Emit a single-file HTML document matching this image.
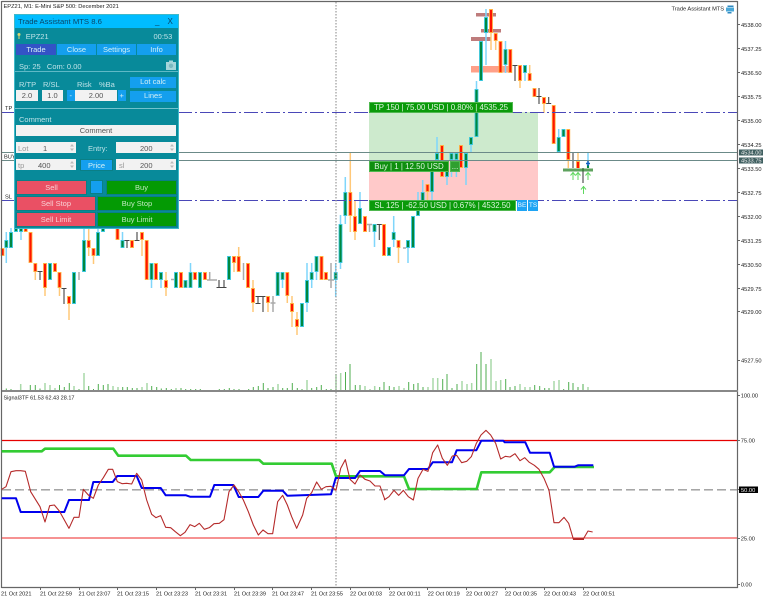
<!DOCTYPE html>
<html>
<head>
<meta charset="utf-8">
<style>
html,body{margin:0;padding:0;background:#fff;}
#p{position:relative;width:769px;height:600px;overflow:hidden;background:#fff;font-family:"Liberation Sans",sans-serif;filter:blur(0.3px);}
svg{position:absolute;left:0;top:0;}
svg text{font-family:"Liberation Sans",sans-serif;}
.a{position:absolute;box-sizing:border-box;white-space:nowrap;}
.b{position:absolute;box-sizing:border-box;text-align:center;white-space:nowrap;font-size:7.5px;color:#d5f0f5;}
.t{background:#149fee;}
.i{background:#f2f2f2;color:#555;}
.s{background:#ea5064;color:#f8d0d4;border:1px solid #0b7f86;}
.g{background:#049a04;color:#bfe8bf;border:1px solid #0b7f86;}
.l{position:absolute;font-size:7.5px;color:#bfe3e8;white-space:nowrap;line-height:9px;}
.tl{font-size:7.9px;color:#dff5df;}
</style>
</head>
<body>
<div id="p">
<svg width="769" height="600" viewBox="0 0 769 600" fill="none">
<!-- trade zones -->
<rect x="369" y="112" width="169" height="48" fill="#cdeacd"/>
<rect x="369" y="160" width="169" height="40" fill="#ffc9c9"/>
<!-- volumes -->
<path stroke="#a9d9a9" stroke-width="1.5" d="M20.7 390v-6M45 390v-7M50 390v-5M55 390v-2M74 390v-4M84 390v-17M113 390v-4M118 390v-3M142 390v-3M147 390v-7M176 390v-2M278 390v-6M307 390v-10M336 390v-16M340.7 390v-17M365 390v-4M370 390v-1M374.7 390v-4M399 390v-4M404 390v-2M428 390v-3M433 390v-12M437.7 390v-12M462 390v-9M467 390v-6M471.7 390v-7M491 390v-31M496 390v-9M500.7 390v-10M520 390v-6M525 390v-3M530 390v-3M554 390v-9M559 390v-10M588 390v-3"/>
<path stroke="#4fae4f" stroke-width="1" d="M6.3 390v-1.500M11 390v-1M30.300 390v-5M35.300 390v-5M40 390v-1.500M59.500 390v-5M64.300 390v-3M69.300 390v-7M79 390v-1M88.700 390v-4M93.500 390v-1M98.300 390v-6M103.300 390v-5M108 390v-6M122.700 390v-3M127.300 390v-3M132.300 390v-2M137 390v-2M151.700 390v-4M156.700 390v-3M161.300 390v-1.500M166.300 390v-2M171.300 390v-1M181 390v-2M185.700 390v-1M190.700 390v-1M195.700 390v-1M200.300 390v-1M219.300 390v-1M224.300 390v-1M229.300 390v-2M234 390v-1M239 390v-1M248.700 390v-1M253.300 390v-3M258.300 390v-4M263.300 390v-7M268 390v-2M273 390v-3M282.700 390v-2M287.300 390v-2M292.300 390v-7M297.300 390v-2M302 390v-1M311.700 390v-2M316.700 390v-3M321.300 390v-5M326.300 390v-1M331 390v-1M345.500 390v-18M350 390v-26M355.300 390v-5M360 390v-5M379.700 390v-3M384 390v-8M389.300 390v-4M394 390v-3M408.700 390v-8M413.700 390v-6M418 390v-7M423 390v-3M442.700 390v-11M447 390v-16M452 390v-2M457 390v-6M476.700 390v-26M481 390v-38M486 390v-26M505.700 390v-11M510 390v-3M515 390v-4M534.700 390v-5M539.700 390v-4M544.700 390v-2M549 390v-2M563.700 390v-1M568.700 390v-8M573 390v-7M578 390v-3M583 390v-6"/>
<!-- pattern bars -->
<rect x="476" y="13" width="20" height="3.500" fill="#a85050" opacity=".75"/>
<rect x="481" y="29" width="20" height="3.500" fill="#a85050" opacity=".75"/>
<rect x="471" y="37" width="20" height="4" fill="#a85050" opacity=".75"/>
<rect x="471" y="66" width="40" height="6.500" fill="#ff8060" opacity=".75"/>
<!-- wicks -->
<path stroke="#7fd6fb" stroke-width="1.500" d="M6.300 232V263M11 228V232M21 232V240M84 226V240M98 228V232M122.500 232V240M151.500 280V288M161 280V288M190.500 263V272M282.500 280V288M307 263V312M311.700 263V288M316.500 272V280M335.700 263V297M340.500 215V269M345.300 177V224M360 192V208M374.500 232V247M393.700 216V247M408 248V263M418 192V208M422.700 180V192M432 192V200M437 137V153M447 177V185M451.500 160V177M456.400 160V177M466 168V185M471 145V153M476.500 81V89M486 9V65M505.500 41V73M525 73V81M558.700 129V137M588 152V165"/>
<path stroke="#ffc878" stroke-width="1.500" d="M35.300 272V280M45 288V296M59.500 288V296M69 304V320M88.700 228V256M93.500 256V264M142 240V256M166 272V296M234 263V272M238.700 247V256M253 280V312M268 303V312M287.300 296V303M292 296V327M297 312V335M350.300 153V232M355 200V240M398.500 248V263M427.500 192V200M491 33V50M495.700 41V50M544 104V113M568.300 160V168M578 152V161M520 81V88M529.700 65V73"/>
<!-- dojis -->
<path stroke="#444" stroke-width="1.100" d="M40 271V280M37.500 271.500H42.500M64 288V304M61.500 288.500H66.500M127 240V248M124.500 240.500H129.500M137 232V240M134.500 240.500H139.500M219 280V288M216.500 287.500H221.500M224 280V288M221.500 287.500H226.500M258 296V303M255.500 296.500H260.500M255.500 303.500H260.500M263 296V312M260.500 296.500H265.500M379.300 224V240M376.800 224.500H381.800M515 65V81M512.500 65.500H517.500M539 88V104M536.500 96.500H541.500M548.700 97V104M546.200 103.500H551.200M573 152V168M583 168V183M590 152.500H596"/>
<path stroke="#aaa" stroke-width="1.500" d="M79 272V280M209.700 272V280M207 280H212M212 280H217M273 296V312M270.500 303H275.500M331 263V288M328 280H334M369.500 224V232M367 224.500H372M243.500 263V280M171 279.500H174M403 248H406"/>
<!-- bull bodies -->
<path stroke="#36c6dc" stroke-width="3.800" stroke-linecap="butt" d="M6.300 240V248M11 232V248M16 226V232M21 226V232M50 263V280M74 272V304M84 240V272M98 232V256M103 226V232M122.500 240V248M151.500 263V280M161 272V280M176 272V288M185.500 280V288M190.500 272V288M200 272V288M229 256V280M277.700 272V296M282.500 272V280M302 303V327M307 280V303M311.700 272V280M316.500 256V272M335.700 272V280M340.500 224V263M345.300 192V216M360 208V224M374.500 224V232M389 247V256M393.700 232V240M408 240V248M413 216V248M418 208V216M422.700 192V208M432 170V192M437 153V160M447 170V177M451.500 153V160M456.400 153V160M466 153V168M471 137V145M476.500 89V137M481 41V81M486 17V33M505.500 49V65M525 65V73M558.700 137V152M563.500 129V137"/>
<path stroke="#008840" stroke-width="2.100" d="M6.300 241V247M11 233V247M16 226V231M21 226V231M50 264V279M74 273V303M84 241V271M98 233V255M103 226V231M122.500 241V247M151.500 264V279M161 273V279M176 273V287M185.500 281V287M190.500 273V287M200 273V287M229 257V279M277.700 273V295M282.500 273V279M302 304V326M307 281V302M311.700 273V279M316.500 257V271M335.700 273V279M340.500 225V262M345.300 193V215M360 209V223M374.500 225V231M389 248V255M393.700 233V239M408 241V247M413 217V247M418 209V215M422.700 193V207M432 171V191M437 154V159M447 171V176M451.500 154V159M456.400 154V159M466 154V167M471 138V144M476.500 90V136M481 42V80M486 18V32M505.500 50V64M525 66V72M558.700 138V151M563.500 130V136M588 165V168"/>
<!-- bear bodies -->
<path stroke="#ffae3c" stroke-width="3.800" d="M2.500 248V256M25.700 226V232M30.500 232V263M35.300 263V272M45 263V288M55 263V272M59.500 272V288M69 296V304M88.700 240V248M93.500 248V256M117.500 228V240M132 240V248M142 232V240M146.700 240V280M156 263V280M166 280V288M181 272V288M195 272V280M205 272V280M234 256V263M238.700 256V272M248 263V288M253 288V303M268 296V303M287.300 272V296M292 303V312M297 319V327M321.500 256V280M326 272V280M350.300 192V216M355 216V232M365 216V232M384 224V256M398.500 240V248M427.500 184V192M442 145V177M461 145V168M491 9V33M495.700 33V41M500.500 41V73M510.300 49V73M520 65V81M529.700 73V81M534.500 88V97M544 97V104M553.700 105V144M568.300 129V160M578 161V168"/>
<path stroke="#ff1400" stroke-width="2.100" d="M2.500 249V255M25.700 226V231M30.500 233V262M35.300 264V271M45 264V287M55 264V271M59.500 273V287M69 297V303M88.700 241V247M93.500 249V255M117.500 229V239M132 241V247M142 233V239M146.700 241V279M156 264V279M166 281V287M181 273V287M195 273V279M205 273V279M234 257V262M238.700 257V271M248 264V287M253 289V302M268 297V302M287.300 273V295M292 304V311M297 320V326M321.500 257V279M326 273V279M350.300 193V215M355 217V231M365 217V231M384 225V255M398.500 241V247M427.500 185V191M442 146V176M461 146V167M491 10V32M495.700 34V40M500.500 42V72M510.300 50V72M520 66V80M529.700 74V80M534.500 89V96M544 98V103M553.700 106V143M568.300 130V159M578 162V168"/>
<!-- horizontal lines -->
<path stroke="#6b8a88" stroke-width="1" d="M2 152.500H737M2 160.500H737"/>
<path stroke="#4a48b8" stroke-width="1" stroke-dasharray="14 3 2 3" d="M2 112.500H737M2 200.500H737"/>
<!-- vertical dotted -->
<path stroke="#999" stroke-width="1.200" stroke-dasharray="1.500 1.500" d="M336 2V588"/>
<!-- blue cross and pattern -->
<path stroke="#1060c0" stroke-width="1.500" d="M588 161V166M586 163.500H590"/>
<rect x="563" y="168.500" width="30" height="3" fill="#1a7a1a" opacity=".7"/>
<path stroke="#5fd85f" stroke-width="1" d="M573 172V180M570.500 175.500L573 172.500L575.500 175.500M578 172V180M575.500 175.500L578 172.500L580.500 175.500M588 172V180M585.500 175.500L588 172.500L590.500 175.500M583.500 186V194M581 189.500L583.500 186.500L586 189.500"/>
<!-- frame -->
<path stroke="#666" stroke-width="1.200" d="M1.500 1.500H737.500M1.500 1V588M737.500 1V588M1.500 587.500H738"/>
<path stroke="#888" stroke-width="2" d="M2 391H738"/>
<path stroke="#666" stroke-width="1" d="M737 24.500h3M737 48.500h3M737 72.500h3M737 96.500h3M737 120.500h3M737 144.500h3M737 168.500h3M737 192.500h3M737 216.500h3M737 240.500h3M737 264.500h3M737 288.500h3M737 311.500h3M737 360.500h3M737 395.500h3M737 440.500h3M737 489.500h3M737 538.500h3M737 584.500h3M40.500 587v3M79.500 587v3M117.500 587v3M156.500 587v3M195.500 587v3M234.500 587v3M272.500 587v3M311.500 587v3M350.500 587v3M389.500 587v3M427.500 587v3M466.500 587v3M505.500 587v3M544.500 587v3M583.500 587v3"/>
<!-- indicator -->
<path stroke="#e60000" stroke-width="1.200" d="M2 440.500H737"/>
<path stroke="#f05050" stroke-width="1.300" d="M2 538H737"/>
<path stroke="#999" stroke-width="1.300" stroke-dasharray="9 4" d="M2 489.800H737"/>
<path stroke="#33cc33" stroke-width="2.600" stroke-linejoin="round" d="M1.700 451.300L41.700 451.300 45 448.700 113.300 448.700 118.300 455.700 186 455.700 190.700 460 259.300 460 263.300 463.700 331.700 463.700 336 476.300 404 476.300 409 489 476.700 489 481.300 472.300 549.700 472.300 554.700 467 594 467"/>
<path stroke="#0000ee" stroke-width="2" stroke-linejoin="round" d="M1.700 498.300L16 498.300 20.700 512 64.300 512 69 500 89 500 93.300 482 112.700 482 117.300 476 136.700 476 141.700 488 160.700 488 165.700 495.300 186 495.300 190 496.700 210 496.700 214.300 485 233.300 485 238.700 497 258.300 497 263.300 490.700 282.700 490.700 287.300 495.700 331 494.300 335.700 478 355 478 360 471 380 471 385 475.300 404 475.300 409 469 428 469 432.700 462.300 452 462.300 456.700 450.300 476.300 450.300 481.300 440.700 503.300 440.700 504.700 442.300 525.300 442.300 530 452.700 549.700 452.700 554 466.700 574.700 466.700 578 465.300 593.300 465.300"/>
<g transform="translate(0,385) scale(.33333)" stroke="#b52a2a" stroke-width="3.300" stroke-linejoin="round">
<path d="M5 313L18 305 33 260 48 257 62 257 76 259 92 320 120 365 135 411 149 362 163 360 178 378 207 430 222 397 237 397 250 313 265 330 280 340 295 300 310 278 325 253 338 253 352 290 366 296 380 295 395 297 410 265 425 285 440 345 455 388 468 398 482 392 497 427 512 428 526 440 541 452 555 442 570 419 584 425 598 415 613 433 628 428 642 416 658 415 672 404 687 320 702 300 716 320 730 345 745 380 760 420 775 450 789 435 804 446 818 446 833 350 848 331 862 360 875 395 890 430 908 390 920 340 935 323 950 291 964 313 978 305 993 304 1008 316 1022 250 1036 224 1050 283 1065 297 1080 270 1095 283 1110 288 1125 303 1140 303 1155 345"/>
</g>
<g transform="translate(384,385) scale(.33333)" stroke="#b52a2a" stroke-width="3.300" stroke-linejoin="round">
<path d="M0 345L15 335 30 316 44 331 58 316 73 335 88 345 102 280 117 253 132 259 146 203 161 180 175 220 190 241 205 213 218 211 233 233 248 229 262 215 277 175 291 150 306 136 320 150 335 175 350 222 364 214 378 216 393 206 408 227 422 218 436 232 451 241 465 253 480 280 495 316 510 413 525 413 540 397 554 415 568 462 598 462 612 438 626 441"/>
</g>
<path stroke="#b52a2a" stroke-width="2" d="M573 539H584"/>
<!-- top labels -->
<text x="3.500" y="8" font-size="5.700" fill="#222">EPZ21, M1:  E-Mini S&amp;P 500: December 2021</text>
<text x="671.500" y="10.500" font-size="5.700" fill="#222">Trade Assistant MTS</text>
<path d="M726 7.500h8v4h-8z" fill="#4aa8d8"/><path d="M727.500 5.500h6v1.500h-6zM727.500 12h4v1.500h-4z" fill="#2f88c0"/>
<text x="5" y="110" font-size="5.700" fill="#222">TP</text>
<text x="4" y="158.500" font-size="5.700" fill="#222">BUY</text>
<text x="5" y="198.500" font-size="5.700" fill="#222">SL</text>
<!-- price axis -->
<g font-size="5.700" fill="#222">
<text x="741" y="27">4538.00</text>
<text x="741" y="51">4537.25</text>
<text x="741" y="75">4536.50</text>
<text x="741" y="99">4535.75</text>
<text x="741" y="123">4535.00</text>
<text x="741" y="147">4534.25</text>
<text x="741" y="171">4533.50</text>
<text x="741" y="195">4532.75</text>
<text x="741" y="219">4532.00</text>
<text x="741" y="243">4531.25</text>
<text x="741" y="267">4530.50</text>
<text x="741" y="291">4529.75</text>
<text x="741" y="314">4529.00</text>
<text x="741" y="362.500">4527.50</text>
<text x="740.700" y="397.500">100.00</text>
<text x="740.700" y="442.500">75.00</text>
<text x="740.700" y="540.500">25.00</text>
<text x="740.700" y="586.500">0.00</text>
</g>
<rect x="739" y="149.500" width="24" height="6" fill="#3f5f60"/>
<rect x="739" y="157.500" width="24" height="6" fill="#3f5f60"/>
<rect x="739" y="486.500" width="19" height="6.500" fill="#000"/>
<g font-size="5.700" fill="#eee">
<text x="741" y="154.700">4534.00</text>
<text x="741" y="162.700">4533.75</text>
<text x="741" y="491.800">50.00</text>
</g>
<!-- sub labels -->
<text x="3.500" y="399.500" font-size="5.500" fill="#222">Signal3TF 61.53 62.43 28.17</text>
<!-- time axis -->
<g font-size="5.600" fill="#222">
<text x="1" y="595.500">21 Oct 2021</text>
<text x="40" y="595.500">21 Oct 22:59</text>
<text x="78.500" y="595.500">21 Oct 23:07</text>
<text x="117" y="595.500">21 Oct 23:15</text>
<text x="156" y="595.500">21 Oct 23:23</text>
<text x="195" y="595.500">21 Oct 23:31</text>
<text x="234" y="595.500">21 Oct 23:39</text>
<text x="272" y="595.500">21 Oct 23:47</text>
<text x="311" y="595.500">21 Oct 23:55</text>
<text x="350" y="595.500">22 Oct 00:03</text>
<text x="389" y="595.500">22 Oct 00:11</text>
<text x="427.700" y="595.500">22 Oct 00:19</text>
<text x="466" y="595.500">22 Oct 00:27</text>
<text x="505" y="595.500">22 Oct 00:35</text>
<text x="544" y="595.500">22 Oct 00:43</text>
<text x="583" y="595.500">22 Oct 00:51</text>
</g>
</svg>

<!-- trade labels -->
<div class="b tl" style="left:369px;top:102px;width:144px;height:11px;line-height:10px;background:#0a9a0a;border:1px solid #4fb84f;">TP 150 | 75.00 USD | 0.80% | 4535.25</div>
<div class="b tl" style="left:369px;top:161px;width:80px;height:11px;line-height:10px;background:#0f8f0f;border:1px solid #4fb84f;">Buy | 1 | 12.50 USD</div>
<div class="b tl" style="left:450px;top:161px;width:10px;height:11px;line-height:9px;background:#2f9f2f;border:1px solid #4fb84f;overflow:hidden;">...</div>
<div class="b tl" style="left:369px;top:200px;width:147px;height:11px;line-height:10px;background:#0a9a0a;border:1px solid #4fb84f;">SL 125 | -62.50 USD | 0.67% | 4532.50</div>
<div class="b" style="left:517px;top:200px;width:10px;height:11px;line-height:11px;background:#1ea4f4;color:#e8f6ff;font-size:6.500px;">BE</div>
<div class="b" style="left:528px;top:200px;width:10px;height:11px;line-height:11px;background:#1ea4f4;color:#e8f6ff;font-size:6.500px;">TS</div>

<!-- panel -->
<div class="a" style="left:14px;top:14px;width:165px;height:214.500px;background:#088a9a;border:1px solid #3fb9c9;"></div>
<div class="a" style="left:15px;top:15px;width:163px;height:13px;background:#00bcff;"></div>
<div class="l" style="left:18px;top:17px;color:#0a4668;font-size:7.700px;">Trade Assistant MTS 8.6</div>
<div class="l" style="left:155px;top:17px;color:#0a4668;font-size:8px;">_</div>
<div class="l" style="left:167.500px;top:16.500px;color:#0a4668;font-size:8px;">X</div>

<div class="l" style="left:25.700px;top:32px;">EPZ21</div>
<div class="l" style="left:153.500px;top:32px;">00:53</div>

<div class="b" style="left:16px;top:44px;width:40px;height:11px;line-height:11px;background:#3353c6;">Trade</div>
<div class="b t" style="left:57px;top:44px;width:39px;height:11px;line-height:11px;">Close</div>
<div class="b t" style="left:97px;top:44px;width:39px;height:11px;line-height:11px;">Settings</div>
<div class="b t" style="left:137px;top:44px;width:39px;height:11px;line-height:11px;">Info</div>

<div class="l" style="left:19px;top:62px;">Sp: 25&nbsp;&nbsp; Com: 0.00</div>
<div class="a" style="left:15px;top:71px;width:163px;height:1px;background:#5fb9c6;"></div>

<div class="l" style="left:19px;top:80px;">R/TP</div>
<div class="l" style="left:43px;top:80px;">R/SL</div>
<div class="l" style="left:77px;top:80px;">Risk</div>
<div class="l" style="left:99px;top:80px;">%Ba</div>
<div class="b t" style="left:130px;top:77px;width:46px;height:10.500px;line-height:10.500px;">Lot calc</div>
<div class="b t" style="left:130px;top:91px;width:46px;height:10.500px;line-height:10.500px;">Lines</div>
<div class="b i" style="left:16px;top:90px;width:22px;height:11px;line-height:11px;">2.0</div>
<div class="b i" style="left:42px;top:90px;width:21px;height:11px;line-height:11px;">1.0</div>
<div class="b t" style="left:67px;top:90px;width:7.500px;height:11px;line-height:11px;">-</div>
<div class="b i" style="left:75px;top:90px;width:42px;height:11px;line-height:11px;">2.00</div>
<div class="b t" style="left:118px;top:90px;width:7.500px;height:11px;line-height:11px;">+</div>

<div class="a" style="left:15px;top:108px;width:163px;height:1px;background:#72c2ce;"></div>
<div class="l" style="left:19px;top:115px;">Comment</div>
<div class="b i" style="left:16px;top:125px;width:160px;height:11px;line-height:11px;">Comment</div>

<div class="a i" style="left:16px;top:142px;width:60px;height:11px;"></div>
<div class="l" style="left:18px;top:144px;color:#999;">Lot</div>
<div class="l" style="left:43px;top:144px;color:#555;">1</div>
<div class="l" style="left:88px;top:144px;">Entry:</div>
<div class="a i" style="left:116px;top:142px;width:60px;height:11px;"></div>
<div class="l" style="left:140px;top:144px;color:#555;">200</div>

<div class="a i" style="left:16px;top:159px;width:60px;height:11px;"></div>
<div class="l" style="left:18px;top:161px;color:#999;">tp</div>
<div class="l" style="left:38px;top:161px;color:#555;">400</div>
<div class="b t" style="left:80px;top:158.500px;width:33px;height:12px;line-height:11px;border:1px solid #0b7f86;">Price</div>
<div class="a i" style="left:116px;top:159px;width:60px;height:11px;"></div>
<div class="l" style="left:119px;top:161px;color:#999;">sl</div>
<div class="l" style="left:140px;top:161px;color:#555;">200</div>

<div class="b s" style="left:16px;top:179.500px;width:71px;height:15px;line-height:14px;">Sell</div>
<div class="a t" style="left:90px;top:180px;width:13px;height:14px;border:1px solid #0b7f86;"></div>
<div class="b g" style="left:106px;top:179.500px;width:71px;height:15px;line-height:14px;">Buy</div>
<div class="b s" style="left:16px;top:195.500px;width:80px;height:15px;line-height:14px;">Sell Stop</div>
<div class="b g" style="left:97px;top:195.500px;width:80px;height:15px;line-height:14px;">Buy Stop</div>
<div class="b s" style="left:16px;top:211.500px;width:80px;height:15px;line-height:14px;">Sell Limit</div>
<div class="b g" style="left:97px;top:211.500px;width:80px;height:15px;line-height:14px;">Buy Limit</div>

<svg width="769" height="600" viewBox="0 0 769 600" fill="none">
<!-- key icon -->
<circle cx="19" cy="34.500" r="1.500" fill="#d8d870"/><path stroke="#d8d870" d="M19 36V39"/>
<!-- camera -->
<path fill="#a5d5da" d="M166 62h10v8h-10zM169 60.500h4V62h-4z"/><circle cx="171" cy="65.800" r="2.200" fill="#7ab8c0"/>
<!-- spinners -->
<path fill="#bbb" d="M70 146.500l2-2.500 2 2.500zM70 148.500l2 2.500 2-2.500zM70 163.500l2-2.500 2 2.500zM70 165.500l2 2.500 2-2.500zM170 146.500l2-2.500 2 2.500zM170 148.500l2 2.500 2-2.500zM170 163.500l2-2.500 2 2.500zM170 165.500l2 2.500 2-2.500z"/>
</svg>
</div>
</body>
</html>
